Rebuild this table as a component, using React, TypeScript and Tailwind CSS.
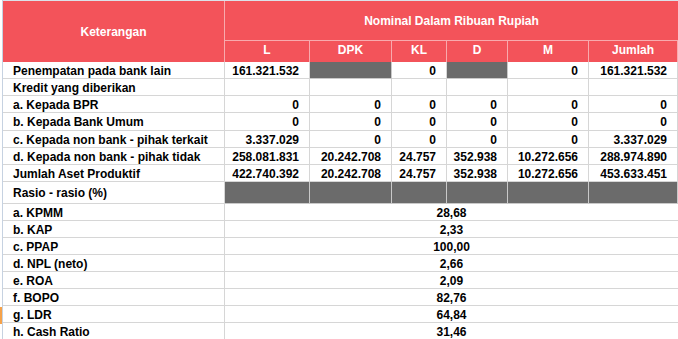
const font = { fontFamily: '"Liberation Sans", Arial, sans-serif' };

type Row = { label: string; values: (string | null)[]; h: string };

// null = grey (not applicable) cell
const rows: Row[] = [
  { label: 'Penempatan pada bank lain', values: ['161.321.532', null, '0', null, '0', '161.321.532'], h: 'h-[17px]' },
  { label: 'Kredit yang diberikan', values: ['', '', '', '', '', ''], h: 'h-[17px]' },
  { label: 'a. Kepada BPR', values: ['0', '0', '0', '0', '0', '0'], h: 'h-[17px]' },
  { label: 'b. Kepada Bank Umum', values: ['0', '0', '0', '0', '0', '0'], h: 'h-[18px]' },
  { label: 'c. Kepada non bank - pihak terkait', values: ['3.337.029', '0', '0', '0', '0', '3.337.029'], h: 'h-[17px]' },
  { label: 'd. Kepada non bank - pihak tidak', values: ['258.081.831', '20.242.708', '24.757', '352.938', '10.272.656', '288.974.890'], h: 'h-[17px]' },
  { label: 'Jumlah Aset Produktif', values: ['422.740.392', '20.242.708', '24.757', '352.938', '10.272.656', '453.633.451'], h: 'h-[17px]' },
  { label: 'Rasio - rasio (%)', values: [null, null, null, null, null, null], h: 'h-[22px]' },
];

const ratios = [
  ['a. KPMM', '28,68'],
  ['b. KAP', '2,33'],
  ['c. PPAP', '100,00'],
  ['d. NPL (neto)', '2,66'],
  ['e. ROA', '2,09'],
  ['f. BOPO', '82,76'],
  ['g. LDR', '64,84'],
  ['h. Cash Ratio', '31,46'],
];

const cols = ['L', 'DPK', 'KL', 'D', 'M', 'Jumlah'];

export default function App() {
  return (
    <div className="flex h-[339px] w-[678px] overflow-hidden bg-white text-[12px] font-bold text-black" style={font}>
      {/* row header edge */}
      <div className="flex w-[3px] flex-col border-r border-[#c6d2e1]">
        <div className="h-[307px]" />
        <div className="h-[17px] bg-[#f5a24a]" />
        <div className="flex-1" />
      </div>

      <div className="flex w-[675px] flex-col">
        <div className="h-[2px] border-b border-[#dbe2ea]" />
        <div className="grid grid-cols-[222px_85px_82px_55px_61px_81px_89px] leading-none">
          {/* header */}
          <div className="row-span-2 flex h-[61px] items-center justify-center border-r border-[#f8aaad] bg-[#f3535a] text-white">
            Keterangan
          </div>
          <div className="col-span-6 flex h-[40px] items-center justify-center border-b border-[#f8aaad] bg-[#f3535a] text-white">
            Nominal Dalam Ribuan Rupiah
          </div>
          {cols.map((c) => (
            <div
              key={c}
              className="flex h-[21px] items-center justify-center border-r border-[#f8aaad] bg-[#f3535a] pb-[3px] text-white"
            >
              {c}
            </div>
          ))}

          {/* body */}
          {rows.map((r) => (
            <div key={r.label} className="contents">
              <div className={`flex ${r.h} items-center border-r border-b border-[#d6d6d6] pt-px pl-[10px] whitespace-nowrap`}>
                {r.label}
              </div>
              {r.values.map((v, i) =>
                v === null ? (
                  <div key={i} className={`${r.h} border-r border-b border-[#c9c9c9] bg-[#6b6b6b]`} />
                ) : (
                  <div
                    key={i}
                    className={`flex ${r.h} items-center justify-end border-r border-b border-[#d6d6d6] pt-px pr-[10px]`}
                  >
                    {v}
                  </div>
                )
              )}
            </div>
          ))}

          {ratios.map(([label, val]) => (
            <div key={label} className="contents">
              <div className="flex h-[17px] items-center border-r border-b border-[#d6d6d6] pt-px pl-[10px]">{label}</div>
              <div className="col-span-6 flex h-[17px] items-center justify-center border-b border-[#d6d6d6] pt-px">
                {val}
              </div>
            </div>
          ))}
        </div>
      </div>
    </div>
  );
}
